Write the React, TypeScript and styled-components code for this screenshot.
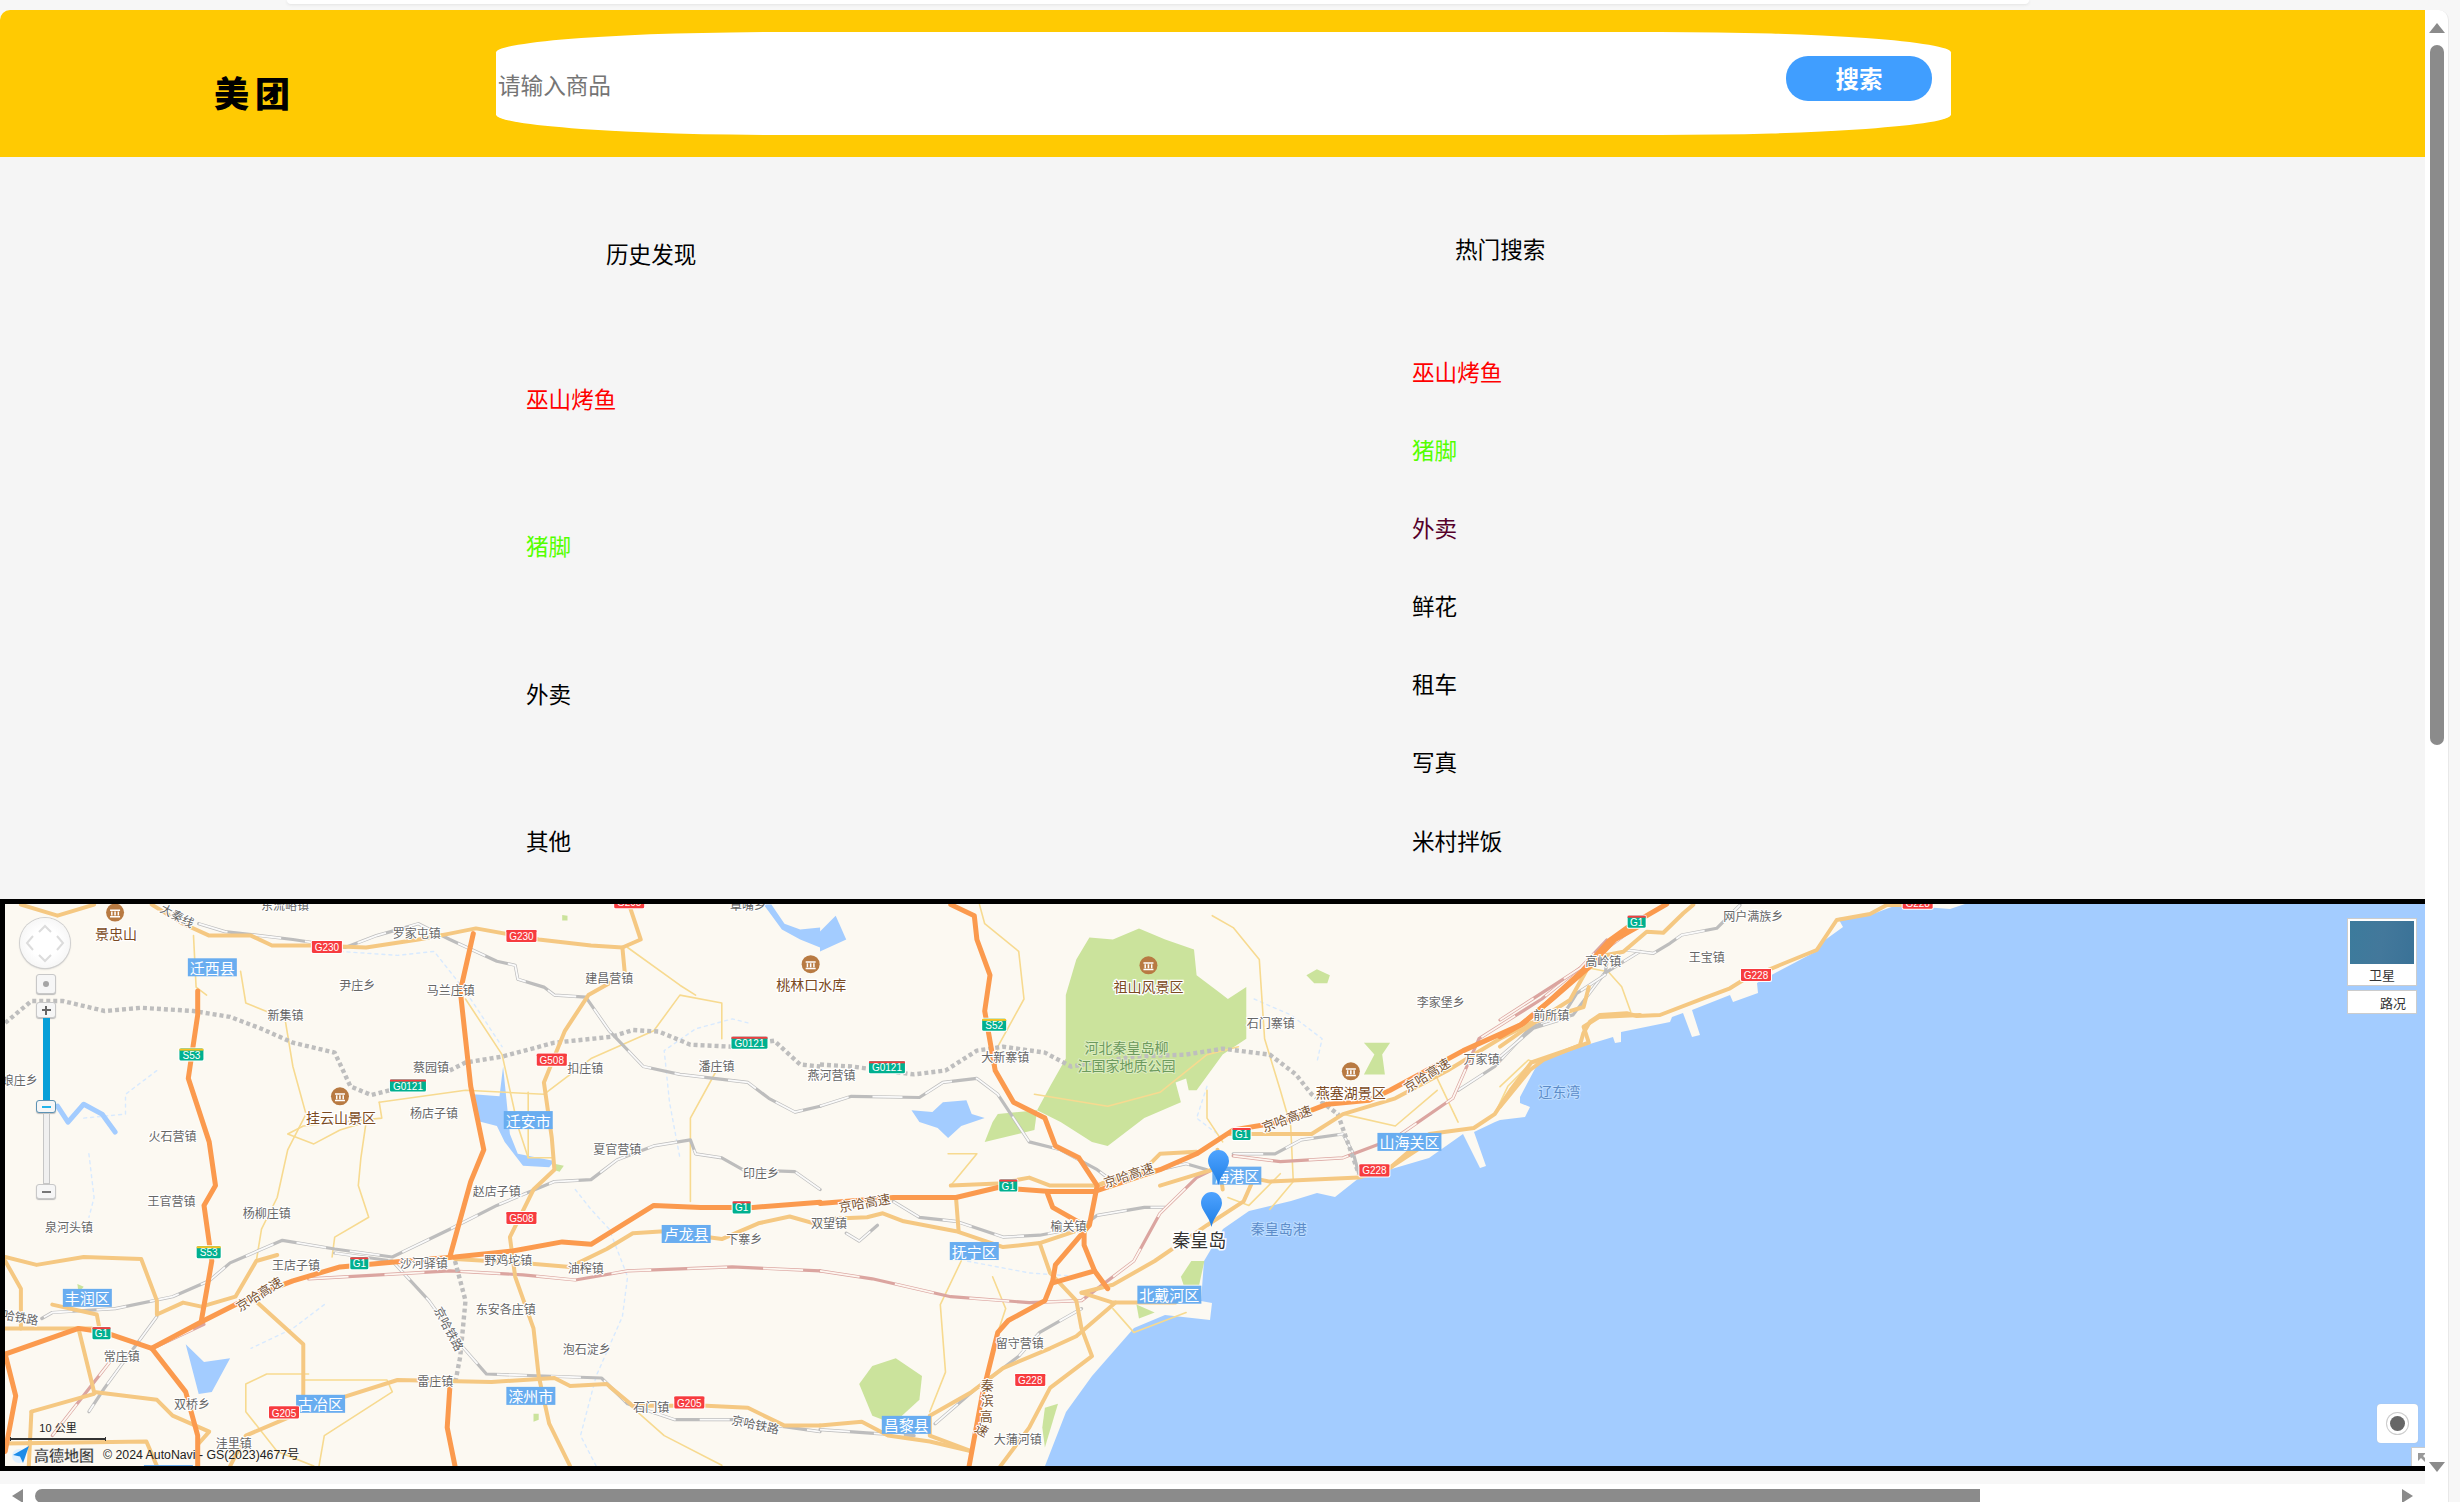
import React from 'react'
import styled, { createGlobalStyle } from 'styled-components'

const GlobalStyle = createGlobalStyle`
  html, body {
    margin: 0;
    width: 2460px;
    height: 1502px;
    overflow: hidden;
    background: #f7f7f7;
    font-family: "Liberation Sans", "Noto Sans CJK SC", sans-serif;
  }
`

const Page = styled.div`
  width: 2460px;
  height: 1502px;
  overflow: hidden;
`

const TopStrip = styled.div`
  height: 10px;
  padding: 0 431px 0 287px;
`

const TabEdge = styled.div`
  height: 4px;
  background: #fff;
  border-radius: 0 0 10px 10px;
  box-shadow: 0 1px 3px #e3e3e3;
`

const Frame = styled.div`
  display: flex;
  width: 2448px;
  height: 1492px;
  background: #fff;
  border-right: 1px solid #e8e8e8;
  border-radius: 10px 10px 0 0;
  overflow: hidden;
`

const Viewport = styled.div`
  width: 2425px;
  flex: none;
  overflow: hidden;
  background: #f7f7f7;
`

const Header = styled.header`
  display: flex;
  align-items: center;
  height: 147px;
  background: #ffca02;
`

const Logo = styled.div`
  flex: none;
  width: 496px;
  padding-left: 214px;
  box-sizing: border-box;
  margin-top: 15px;
  white-space: nowrap;
  font-family: "Noto Sans CJK SC", sans-serif;
  font-size: 35px;
  font-weight: 900;
  letter-spacing: 6px;
  color: #000;
`

const SearchBox = styled.div`
  display: flex;
  align-items: center;
  flex: none;
  width: 1455px;
  height: 103px;
  padding: 0 19px 0 2px;
  box-sizing: border-box;
  background: #fff;
  border-radius: 20%;
`

const SearchInput = styled.input`
  flex: 1;
  border: none;
  outline: none;
  padding: 0;
  margin-top: 1px;
  background: transparent;
  font-family: "Noto Sans CJK SC", sans-serif;
  font-size: 22.6px;
`

const SearchButton = styled.button`
  width: 146px;
  height: 45px;
  margin-bottom: 11px;
  border: none;
  border-radius: 22px;
  background: #409eff;
  color: #fff;
  font-family: "Noto Sans CJK SC", sans-serif;
  font-size: 23.5px;
  font-weight: 700;
`

const Lists = styled.section`
  display: grid;
  grid-template-columns: 886px 1fr;
  height: 742px;
  padding-left: 526px;
  background: #f5f5f5;
`

const Column = styled.div<{ $top: number }>`
  padding-top: ${p => p.$top}px;
`

const ColumnTitle = styled.h3<{ $indent: number; $after: number }>`
  margin: 0 0 ${p => p.$after}px ${p => p.$indent}px;
  font-family: "Noto Sans CJK SC", sans-serif;
  font-size: 22.6px;
  font-weight: 400;
  line-height: 34px;
  color: #000;
`

const ItemList = styled.ul<{ $gap: number }>`
  display: flex;
  flex-direction: column;
  gap: ${p => p.$gap}px;
  margin: 0;
  padding: 0;
  list-style: none;
`

const Item = styled.li<{ $color?: string }>`
  font-family: "Noto Sans CJK SC", sans-serif;
  font-size: 22.6px;
  line-height: 34px;
  color: ${p => p.$color || '#000'};
`

const MapBox = styled.div`
  width: 2440px;
  height: 562px;
  border: 5px solid #000;
`

const MapCanvas = styled.div`
  position: relative;
  width: 2440px;
  height: 562px;
  overflow: hidden;
  background: #fcf9f2;
`

const MapSvg = styled.svg`
  display: block;
`

const NavDisk = styled.div`
  position: absolute;
  left: 15px;
  top: 14px;
  width: 50px;
  height: 50px;
  border-radius: 50%;
  background: radial-gradient(circle, #fff 40%, #efefef);
  box-shadow: 0 0 0 1px #d0d0d0, 0 1px 2px #aaa;
  svg {
    display: block;
  }
`

const ZoomRail = styled.div`
  position: absolute;
  left: 31px;
  top: 70px;
  width: 20px;
  display: flex;
  flex-direction: column;
  align-items: center;
`

const ZoomKey = styled.div<{ $h: number; $after?: number; $active?: boolean }>`
  display: flex;
  align-items: center;
  justify-content: center;
  width: 20px;
  height: ${p => p.$h}px;
  margin-bottom: ${p => p.$after || 0}px;
  box-sizing: border-box;
  background: #f6f6f6;
  border: 1px solid ${p => (p.$active ? '#5c93b5' : '#c8c8c8')};
  border-radius: 3px;
  box-shadow: 0 1px 1px #bbb;
`

const Dot = styled.span`
  width: 6px;
  height: 6px;
  border-radius: 50%;
  background: #a5a5a5;
`

const Dash = styled.span<{ $color: string }>`
  position: relative;
  width: 9px;
  height: 2px;
  background: ${p => p.$color};
`

const PlusBar = styled.span`
  position: absolute;
  left: 3.5px;
  top: -3.5px;
  width: 2px;
  height: 9px;
  background: #666;
`

const ZoomTrack = styled.div<{ $h: number; $filled?: boolean }>`
  width: 7px;
  height: ${p => p.$h}px;
  box-sizing: border-box;
  background: ${p => (p.$filled ? '#079fd8' : '#f0f0f0')};
  border: ${p => (p.$filled ? 'none' : '1px solid #c6c6c6')};
`

const LayerCard = styled.div`
  position: absolute;
  left: 2342px;
  top: 14px;
  width: 70px;
  display: flex;
  flex-direction: column;
  gap: 4px;
  font-family: "Noto Sans CJK SC", sans-serif;
  font-size: 13px;
  color: #333;
`

const Satellite = styled.div`
  height: 68px;
  box-sizing: border-box;
  padding: 2px 2px 0;
  background: #fff;
  border: 1px solid #ccc;
  text-align: center;
  line-height: 21px;
`

const SatelliteThumb = styled.div`
  height: 43px;
  background: linear-gradient(100deg, #3c7b9c, #43789b 50%, #3a7297);
`

const Traffic = styled.div`
  height: 24px;
  box-sizing: border-box;
  padding-right: 10px;
  background: #fff;
  border: 1px solid #ccc;
  text-align: right;
  line-height: 24px;
`

const LocateButton = styled.div`
  position: absolute;
  left: 2372px;
  top: 500px;
  width: 41px;
  height: 39px;
  display: flex;
  align-items: center;
  justify-content: center;
  background: #fff;
  border-radius: 4px;
  box-shadow: 0 0 1px #bbb;
`

const LocateDot = styled.span`
  width: 15px;
  height: 15px;
  border-radius: 50%;
  background: #666;
  box-shadow: 0 0 0 3px #fff, 0 0 0 4px #ccc;
`

const ExpandTab = styled.div`
  position: absolute;
  left: 2406px;
  top: 543px;
  width: 30px;
  height: 20px;
  box-sizing: border-box;
  padding: 5px 0 0 6px;
  background: #fff;
  border: 1px solid #ccc;
  svg {
    display: block;
  }
`

const ScaleBar = styled.div`
  position: absolute;
  left: 5px;
  top: 517px;
  width: 96px;
  font-size: 11px;
  line-height: 14px;
  text-align: center;
  color: #222;
  font-family: "Liberation Sans", "Noto Sans CJK SC", sans-serif;
`

const ScaleLine = styled.div`
  height: 4px;
  margin-top: 2px;
  box-sizing: border-box;
  border: 1px solid #333;
  border-width: 0 1px;
  background: linear-gradient(#0000 1px, #333 1px, #333 3px, #0000 3px);
`

const Attribution = styled.div`
  position: absolute;
  left: 5px;
  top: 540px;
  display: flex;
  align-items: center;
  height: 20px;
  svg {
    display: block;
  }
`

const Brand = styled.span`
  margin-left: 4px;
  font-family: "Noto Sans CJK SC", sans-serif;
  font-size: 15px;
  font-weight: 700;
  color: #333;
  -webkit-text-stroke: 0.3px #fff;
`

const Copyright = styled.span`
  margin-left: 9px;
  font-size: 12.3px;
  color: #222;
`

const MapFoot = styled.div`
  height: 13px;
`

const HScroll = styled.div`
  display: flex;
  align-items: flex-start;
  height: 18px;
  padding: 5px 0 0 12px;
  box-sizing: border-box;
  background: #fff;
`

const HThumb = styled.div`
  flex: none;
  width: 1945px;
  height: 14px;
  margin: 0 422px 0 12px;
  background: #8b8b8b;
  border-radius: 7px 0 0 7px;
`

const ArrowLeft = styled.span`
  flex: none;
  border-style: solid;
  border-width: 7px 11px 7px 0;
  border-color: transparent #8b8b8b transparent transparent;
`

const ArrowRight = styled.span`
  flex: none;
  border-style: solid;
  border-width: 7px 0 7px 11px;
  border-color: transparent transparent transparent #8b8b8b;
`

const VScroll = styled.div`
  flex: 1;
  display: flex;
  flex-direction: column;
  align-items: center;
  padding: 13px 0 30px;
  box-sizing: border-box;
`

const ArrowUp = styled.span`
  flex: none;
  border-style: solid;
  border-width: 0 8px 10px;
  border-color: transparent transparent #8b8b8b;
`

const VThumb = styled.div`
  flex: none;
  width: 14px;
  height: 700px;
  margin: 12px 0 auto;
  background: #8b8b8b;
  border-radius: 7px;
`

const ArrowDown = styled.span`
  flex: none;
  border-style: solid;
  border-width: 10px 8px 0;
  border-color: #8b8b8b transparent transparent;
`

// map drawing parts
const WAY_STYLES: Record<string, string> = {
  minor: 'stroke:#f7da90;stroke-width:1.6;',
  gray: 'stroke:#bdbdbd;stroke-width:3.2;',
  grayTop: 'stroke:#fafafa;stroke-width:1.8;stroke-dasharray:30 24;stroke-linecap:butt;',
  dots: 'stroke:#bebebe;stroke-width:4.4;stroke-dasharray:4 3;stroke-linecap:butt;',
  pink: 'stroke:#dba5a0;stroke-width:3.2;',
  pinkTop: 'stroke:#fdf6f0;stroke-width:1.8;stroke-dasharray:40 36;stroke-linecap:butt;',
  nat: 'stroke:#f5c882;stroke-width:4;',
  high: 'stroke:#fb9a4e;stroke-width:5;',
  stream: 'stroke:#d8eaff;stroke-width:1.4;stroke-dasharray:3 4;',
  river: 'stroke:#a3ccff;stroke-width:5;',
}

const Way = styled.path<{ $kind: string }>`
  fill: none;
  stroke-linejoin: round;
  stroke-linecap: round;
  ${p => WAY_STYLES[p.$kind]}
`

const Area = styled.path<{ $fill: string }>`
  fill: ${p => p.$fill};
`

const LABEL_STYLES: Record<string, string> = {
  town: 'font-size:12px;fill:#666;stroke:#fff;stroke-width:2px;',
  scenic: 'font-size:14px;fill:#7b4a22;stroke:#fff;stroke-width:2.5px;',
  road: 'font-size:13px;fill:#7b5533;stroke:#fff;stroke-width:2px;',
  rail: 'font-size:12px;fill:#666;stroke:#fff;stroke-width:2px;',
  park: 'font-size:14px;fill:#6c9a5d;stroke:#dcecc0;stroke-width:2px;',
  sea: 'font-size:14px;fill:#5c8cc9;stroke:#bcdcff;stroke-width:2px;',
  city: 'font-size:18px;fill:#333;stroke:#fff;stroke-width:3px;',
  dist: 'font-size:15px;fill:#fff;stroke:none;',
}

const Label = styled.text<{ $kind: string }>`
  font-family: "Noto Sans CJK SC", sans-serif;
  text-anchor: middle;
  dominant-baseline: central;
  paint-order: stroke;
  ${p => LABEL_STYLES[p.$kind]}
`

const BadgeText = styled.text`
  font-family: "Liberation Sans", sans-serif;
  font-size: 10px;
  fill: #fff;
  text-anchor: middle;
  dominant-baseline: central;
`

// the zoomed crops were not scaled evenly, so points are kept as read and converted here
type Panel = 'L' | 'R' | 'Z'
const px = (a: Panel, x: number) => (a === 'L' ? x / 1.912 : a === 'R' ? 820 + x / 1.912 : 1500 + x / 3)
const py = (a: Panel, y: number) => (a === 'Z' ? 900 + y / 3 : 880 + y / 2.52)
const line = (a: Panel, d: number[], close = false) => {
  let out = ''
  for (let i = 0; i < d.length; i += 2) {
    out += `${i ? 'L' : 'M'}${px(a, d[i]).toFixed(1)} ${py(a, d[i + 1]).toFixed(1)}`
  }
  return out + (close ? 'Z' : '')
}

type W = [Panel, number[]]

const SEA =
  'M1045 1466L1066 1412L1092 1376L1134 1328L1165 1315L1210 1320L1212 1303L1201 1301L1204 1261L1223 1229L1249 1211L1291 1201L1317 1193L1335 1197L1359 1178L1395 1168L1429 1158L1463 1134L1480 1168L1486 1166L1474 1132L1495 1122L1500 1120L1525 1117L1530 1107L1520 1103L1520 1097L1538 1063L1580 1047L1613 1037L1615 1043L1621 1042L1621 1032L1670 1022L1672 1017L1683 1013L1692 1037L1700 1035L1692 1010L1730 995L1733 1002L1758 993L1757 983L1777 972L1815 952L1825 940L1843 927L1838 918L1870 915L1897 905L1950 909L1965 904L2445 904L2445 1466Z'

const GREENS: W[] = [
  ['R', [515, 145, 560, 150, 610, 122, 660, 150, 715, 175, 720, 240, 760, 280, 780, 300, 815, 270, 815, 400, 770, 440, 720, 530, 705, 530, 700, 500, 680, 510, 690, 560, 620, 600, 550, 670, 520, 660, 460, 610, 415, 580, 440, 520, 470, 450, 470, 290, 490, 200]],
  ['R', [340, 590, 415, 580, 410, 630, 315, 660, 330, 610]],
  ['R', [145, 1205, 195, 1250, 190, 1310, 140, 1370, 100, 1350, 75, 1270, 100, 1225]],
  ['R', [930, 240, 950, 225, 975, 240, 970, 260, 945, 260]],
  ['R', [1040, 410, 1090, 410, 1075, 440, 1080, 490, 1040, 490, 1060, 440]],
  ['R', [690, 1000, 710, 960, 735, 960, 725, 1020, 695, 1020]],
  ['R', [430, 1330, 455, 1320, 430, 1430, 425, 1380]],
  ['R', [605, 1070, 640, 1090, 610, 1105]],
  ['L', [1075, 88, 1085, 90, 1085, 102, 1075, 102]],
  ['L', [1020, 1345, 1030, 1345, 1030, 1360, 1020, 1365]],
  ['L', [1060, 715, 1078, 720, 1070, 735, 1058, 730]],
  ['L', [148, 1018, 160, 1025, 150, 1040]],
]

const LAKES: W[] = [
  ['L', [905, 540, 955, 545, 962, 470, 975, 640, 990, 690, 1060, 708, 1050, 724, 1000, 720, 965, 660, 950, 620, 915, 608, 905, 580]],
  ['L', [355, 1170, 390, 1215, 440, 1205, 405, 1290, 380, 1295, 365, 1220]],
  ['R', [175, 580, 215, 585, 235, 560, 280, 555, 290, 590, 315, 600, 270, 620, 245, 650, 225, 625, 190, 610]],
  ['R', [0, 130, 30, 90, 50, 150, 0, 180]],
  ['L', [1460, 62, 1475, 62, 1500, 110, 1530, 125, 1568, 120, 1568, 170, 1530, 150, 1495, 125]],
]

const WAYS: [string, Panel, number[]][] = [
  ['stream', 'L', [650, 180, 760, 190, 830, 180, 890, 280, 960, 420]],
  ['stream', 'L', [1430, 360, 1400, 350, 1330, 375, 1270, 430, 1280, 560, 1300, 700]],
  ['stream', 'L', [160, 600, 240, 590, 240, 540, 300, 480]],
  ['stream', 'L', [170, 690, 180, 800, 170, 850]],
  ['stream', 'L', [1100, 780, 1130, 830, 1165, 880, 1200, 1000, 1190, 1100, 1140, 1250, 1110, 1400, 1140, 1477]],
  ['stream', 'L', [620, 1070, 560, 1130, 480, 1180]],
  ['stream', 'R', [830, 300, 900, 340, 960, 400, 950, 460]],
  ['stream', 'R', [500, 1000, 400, 990, 280, 960]],
  ['stream', 'R', [740, 520, 720, 600, 760, 640]],
  ['river', 'L', [110, 570, 130, 610, 160, 565, 195, 590, 220, 635]],

  ['minor', 'L', [370, 140, 375, 270, 395, 290]],
  ['minor', 'L', [460, 230, 470, 310, 545, 350, 560, 470, 585, 590, 550, 680, 530, 800, 500, 880, 490, 960]],
  ['minor', 'L', [725, 560, 730, 600, 580, 620, 550, 640, 600, 665, 650, 630, 700, 610, 690, 700, 685, 770, 705, 850, 640, 900, 635, 950]],
  ['minor', 'L', [725, 560, 890, 530, 1040, 540]],
  ['minor', 'L', [890, 300, 960, 440, 990, 620, 1010, 700, 1055, 700]],
  ['minor', 'L', [1010, 535, 1010, 700]],
  ['minor', 'L', [1040, 540, 1130, 450, 1250, 380, 1300, 290, 1380, 310, 1380, 400]],
  ['minor', 'L', [1320, 810, 1320, 600, 1370, 480]],
  ['minor', 'L', [1200, 170, 1300, 265, 1330, 290]],
  ['minor', 'L', [590, 1245, 510, 1245, 470, 1270, 470, 1340, 530, 1440, 600, 1477]],
  ['minor', 'L', [580, 1260, 740, 1260, 750, 1290, 620, 1400, 610, 1477]],
  ['minor', 'L', [1165, 1280, 1210, 1330, 1270, 1400, 1380, 1475]],
  ['minor', 'R', [305, 62, 315, 110, 380, 180, 390, 300, 340, 420, 335, 480]],
  ['minor', 'R', [750, 90, 790, 120, 840, 200, 850, 400, 880, 530, 900, 620, 905, 760, 860, 830]],
  ['minor', 'R', [245, 690, 300, 690, 250, 770]],
  ['minor', 'R', [330, 1000, 355, 1080, 340, 1140]],
  ['minor', 'R', [270, 960, 230, 1070, 240, 1240, 210, 1340]],
  ['minor', 'R', [410, 540, 550, 570, 650, 535, 740, 440, 800, 420]],
  ['minor', 'R', [740, 530, 740, 600, 770, 660]],
  ['minor', 'R', [1180, 500, 1220, 610]],
  ['minor', 'R', [1360, 460, 1315, 520, 1290, 590]],
  ['minor', 'R', [1000, 590, 1100, 620, 1180, 530]],
  ['minor', 'R', [780, 800, 820, 820, 880, 740]],
  ['minor', 'R', [560, 1080, 600, 1140, 700, 1090]],
  ['minor', 'Z', [270, 205, 325, 215, 365, 260, 392, 335]],
  ['minor', 'Z', [0, 560, 85, 480, 110, 490]],

  ['gray', 'L', [380, 110, 430, 130, 560, 150, 660, 170, 720, 140, 800, 110, 860, 150, 950, 205, 985, 215, 990, 250, 1040, 270, 1060, 290, 1120, 295, 1165, 380, 1230, 470, 1300, 490, 1430, 510, 1470, 550, 1520, 585, 1568, 570]],
  ['gray', 'L', [1568, 780, 1520, 735, 1420, 730, 1380, 700, 1330, 690, 1320, 655, 1250, 670, 1180, 705, 1130, 755, 1060, 760, 950, 820, 860, 880, 750, 950, 640, 930, 540, 908, 440, 965, 400, 1010, 330, 1050, 220, 1080, 100, 1090, 80, 1105]],
  ['gray', 'L', [640, 940, 750, 960, 820, 1060, 880, 1170, 930, 1245, 1150, 1255, 1200, 1320, 1290, 1360, 1400, 1360, 1568, 1390]],
  ['gray', 'L', [300, 1100, 200, 1280, 170, 1340]],
  ['gray', 'R', [0, 570, 60, 545, 190, 548, 235, 510, 300, 500, 340, 540, 370, 600, 400, 660, 460, 680, 530, 730, 560, 760]],
  ['gray', 'R', [650, 730, 700, 715, 740, 730]],
  ['gray', 'R', [140, 810, 190, 850, 260, 860, 350, 900, 420, 895, 500, 875, 530, 845, 620, 825, 660, 825]],
  ['gray', 'R', [50, 890, 75, 910, 110, 870]],
  ['gray', 'R', [790, 690, 870, 690, 920, 655, 1000, 640, 1020, 690, 1030, 740]],
  ['gray', 'R', [1220, 530, 1290, 470, 1360, 370, 1440, 340, 1500, 235, 1568, 180]],
  ['gray', 'R', [220, 1370, 300, 1280, 380, 1200, 420, 1140, 500, 1080]],
  ['gray', 'R', [0, 1385, 110, 1395, 180, 1400]],
  ['gray', 'Z', [0, 470, 100, 385, 180, 360, 230, 280, 315, 225, 320, 190]],
  ['gray', 'Z', [380, 150, 460, 160, 510, 130, 545, 105, 650, 85, 720, 15]],

  ['pink', 'L', [590, 1005, 860, 985, 1000, 995, 1100, 1008, 1200, 985, 1400, 975, 1568, 985]],
  ['pink', 'L', [300, 1175, 390, 1120]],
  ['pink', 'L', [100, 1400, 210, 1215]],
  ['pink', 'R', [0, 985, 100, 1005, 250, 1050, 400, 1065, 500, 1060, 600, 960, 650, 840, 720, 750, 750, 730]],
  ['pink', 'R', [790, 695, 880, 710, 1000, 700, 1100, 650, 1210, 550, 1260, 400, 1380, 300, 1450, 225, 1568, 110]],
  ['pink', 'Z', [0, 360, 240, 205, 320, 120]],

  ['dots', 'L', [10, 360, 60, 305, 120, 305, 200, 330, 270, 322, 370, 330, 440, 345, 500, 375, 560, 410, 640, 435, 670, 520, 710, 542, 745, 530]],
  ['dots', 'L', [860, 480, 890, 460, 960, 445, 1060, 410, 1170, 395, 1210, 378, 1260, 382, 1320, 415, 1400, 420, 1480, 405, 1530, 465, 1568, 470]],
  ['dots', 'L', [870, 960, 890, 1060, 880, 1200, 870, 1270]],
  ['dots', 'R', [0, 465, 60, 470, 180, 490, 240, 480, 300, 430, 350, 420, 430, 435, 480, 470, 600, 445, 700, 440, 770, 425, 860, 440, 910, 490, 940, 540, 990, 590, 1030, 740]],

  ['nat', 'L', [40, 62, 110, 90, 180, 62]],
  ['nat', 'L', [290, 62, 350, 110, 400, 140, 480, 140, 520, 165, 600, 165, 700, 170, 800, 150, 860, 135, 910, 122, 1030, 150, 1130, 165, 1190, 170, 1225, 150, 1205, 70]],
  ['nat', 'L', [1190, 170, 1195, 240]],
  ['nat', 'L', [1165, 260, 1125, 290, 1080, 380, 1040, 510, 1055, 650, 1060, 730, 1020, 780, 975, 900, 985, 1000, 1020, 1130, 1030, 1250, 1050, 1370, 1090, 1477]],
  ['nat', 'L', [10, 950, 70, 970, 160, 950, 270, 955, 300, 1060, 300, 1095, 350, 1065, 385, 1075, 450, 1050, 490, 960, 530, 945]],
  ['nat', 'L', [480, 1050, 580, 1170, 580, 1320]],
  ['nat', 'L', [10, 1130, 190, 1130, 185, 1095, 100, 1070]],
  ['nat', 'L', [10, 960, 40, 1030, 40, 1130]],
  ['nat', 'L', [150, 1130, 180, 1290, 300, 1310, 330, 1350, 400, 1390, 380, 1420]],
  ['nat', 'L', [60, 1340, 180, 1295]],
  ['nat', 'L', [60, 1340, 55, 1477]],
  ['nat', 'L', [10, 1420, 280, 1415, 300, 1477]],
  ['nat', 'L', [640, 1310, 760, 1260, 940, 1265, 1060, 1255, 1090, 1275, 1160, 1270, 1210, 1325, 1350, 1325, 1430, 1330, 1500, 1375, 1568, 1375]],
  ['nat', 'L', [560, 1350, 470, 1400, 440, 1477]],
  ['nat', 'L', [870, 955, 1000, 965, 1090, 975, 1160, 930, 1210, 890, 1270, 885, 1380, 905, 1450, 865, 1510, 848, 1568, 870]],
  ['nat', 'R', [0, 855, 90, 850, 120, 840, 160, 860, 260, 885, 350, 925, 420, 915, 500, 880]],
  ['nat', 'R', [260, 800, 265, 885]],
  ['nat', 'R', [250, 770, 340, 765, 400, 750, 440, 770, 530, 770, 620, 730, 650, 690, 720, 685]],
  ['nat', 'R', [530, 770, 580, 740, 650, 730]],
  ['nat', 'R', [650, 770, 750, 730, 860, 760, 1030, 750, 1090, 725, 1165, 660]],
  ['nat', 'R', [420, 915, 440, 990, 490, 1060, 500, 1130, 520, 1200, 440, 1280, 400, 1380, 345, 1477]],
  ['nat', 'R', [825, 765, 810, 810, 740, 870, 640, 960, 560, 1020, 500, 1040]],
  ['nat', 'R', [760, 680, 770, 780]],
  ['nat', 'R', [780, 640, 940, 640, 1000, 590, 1100, 550, 1200, 480, 1300, 400, 1360, 360, 1460, 320, 1470, 270]],
  ['nat', 'R', [1090, 725, 1165, 640, 1250, 625, 1290, 590, 1320, 530, 1360, 460, 1470, 410, 1460, 370, 1490, 345, 1568, 340]],
  ['nat', 'R', [565, 1065, 490, 1150, 440, 1180, 350, 1230, 290, 1290, 210, 1350, 210, 1400, 290, 1440]],
  ['nat', 'R', [0, 1375, 80, 1365, 130, 1400, 210, 1415, 290, 1440]],
  ['nat', 'R', [500, 1040, 560, 1065, 680, 1065]],
  ['nat', 'Z', [0, 620, 90, 510, 130, 480, 240, 435, 250, 400, 270, 365, 300, 345, 380, 340, 410, 348, 480, 345, 610, 295, 690, 265, 730, 240, 840, 195, 950, 150, 1010, 60, 1110, 42, 1160, 15, 1205, 15]],
  ['nat', 'Z', [0, 440, 100, 370, 210, 300, 260, 210, 280, 195]],
  ['nat', 'Z', [320, 165, 370, 155, 440, 95, 490, 98, 550, 40, 580, 14]],

  ['high', 'L', [10, 1195, 150, 1130, 200, 1140, 290, 1180, 390, 1110, 480, 1050, 560, 1010, 650, 975, 760, 962, 870, 950, 980, 935, 1075, 912, 1130, 918, 1250, 820, 1340, 825, 1440, 825, 1568, 812]],
  ['high', 'L', [378, 280, 378, 340, 360, 500, 400, 660, 412, 770, 390, 820, 405, 960, 385, 1110]],
  ['high', 'L', [905, 135, 880, 280, 890, 400, 900, 520, 925, 680, 900, 760, 860, 950]],
  ['high', 'L', [290, 1180, 355, 1290, 378, 1400, 378, 1477]],
  ['high', 'L', [860, 1280, 855, 1380, 870, 1477]],
  ['high', 'L', [10, 1195, 30, 1300, 10, 1440]],
  ['high', 'R', [0, 815, 140, 800, 260, 800, 340, 775, 440, 785, 525, 785, 650, 730, 720, 690, 790, 630, 880, 610, 970, 565, 1050, 555, 1090, 530, 1230, 430, 1340, 365, 1400, 300, 1470, 220, 1520, 150, 1568, 115]],
  ['high', 'R', [250, 62, 295, 90, 300, 150, 325, 240, 315, 330, 335, 480, 370, 560, 430, 600, 450, 670, 495, 700, 530, 770, 515, 870, 450, 970, 445, 1010, 430, 1060, 360, 1110, 340, 1140, 310, 1300, 285, 1477]],
  ['high', 'R', [435, 790, 445, 825, 505, 870, 505, 920, 525, 985, 445, 1015]],
  ['high', 'R', [525, 985, 550, 1030]],
  ['high', 'Z', [0, 410, 70, 370, 140, 310, 250, 210, 330, 120, 400, 70, 500, 12]],
]

const LABELS: [string, Panel, number, number, string, number?][] = [
  ['town', 'L', 545, 62, '东流峪镇'],
  ['town', 'L', 1430, 62, '章嘴乡'],
  ['town', 'L', 797, 133, '罗家屯镇'],
  ['town', 'L', 683, 263, '尹庄乡'],
  ['town', 'L', 862, 277, '马兰庄镇'],
  ['town', 'L', 1165, 246, '建昌营镇'],
  ['town', 'L', 546, 340, '新集镇'],
  ['town', 'L', 824, 470, '蔡园镇'],
  ['town', 'L', 1119, 473, '扣庄镇'],
  ['town', 'L', 1370, 467, '潘庄镇'],
  ['town', 'L', 1590, 490, '燕河营镇'],
  ['town', 'L', 38, 502, '娘庄乡'],
  ['town', 'L', 830, 587, '杨店子镇'],
  ['town', 'L', 330, 645, '火石营镇'],
  ['town', 'L', 1180, 677, '夏官营镇'],
  ['town', 'L', 1455, 737, '印庄乡'],
  ['town', 'L', 328, 808, '王官营镇'],
  ['town', 'L', 510, 838, '杨柳庄镇'],
  ['town', 'L', 132, 873, '泉河头镇'],
  ['town', 'L', 950, 782, '赵店子镇'],
  ['town', 'L', 1423, 904, '下寨乡'],
  ['town', 'L', 1585, 862, '双望镇'],
  ['town', 'L', 566, 968, '王店子镇'],
  ['town', 'L', 810, 963, '沙河驿镇'],
  ['town', 'L', 972, 957, '野鸡坨镇'],
  ['town', 'L', 1120, 977, '油榨镇'],
  ['town', 'L', 967, 1079, '东安各庄镇'],
  ['town', 'L', 1122, 1181, '泡石淀乡'],
  ['town', 'L', 233, 1198, '常庄镇'],
  ['town', 'L', 832, 1262, '雷庄镇'],
  ['town', 'L', 367, 1320, '双桥乡'],
  ['town', 'L', 1245, 1328, '石门镇'],
  ['town', 'L', 447, 1418, '洼里镇'],
  ['town', 'R', 354, 445, '大新寨镇'],
  ['town', 'R', 862, 360, '石门寨镇'],
  ['town', 'R', 1187, 305, '李家堡乡'],
  ['town', 'R', 1398, 338, '前所镇'],
  ['town', 'R', 1265, 450, '万家镇'],
  ['town', 'R', 475, 870, '榆关镇'],
  ['town', 'R', 382, 1165, '留守营镇'],
  ['town', 'R', 378, 1408, '大蒲河镇'],
  ['town', 'Z', 310, 182, '高岭镇'],
  ['town', 'Z', 760, 45, '网户满族乡'],
  ['town', 'Z', 620, 170, '王宝镇'],
  ['rail', 'L', 340, 88, '大秦线', 28],
  ['rail', 'L', 860, 1130, '京哈铁路', 62],
  ['rail', 'L', 1445, 1370, '京哈铁路', 12],
  ['rail', 'L', 40, 1100, '哈铁路', 10],
  ['road', 'L', 495, 1042, '京哈高速', -32],
  ['road', 'R', 85, 812, '京哈高速', -10],
  ['road', 'R', 590, 742, '京哈高速', -18],
  ['road', 'R', 892, 600, '京哈高速', -20],
  ['road', 'R', 1160, 490, '京哈高速', -32],
  ['road', 'R', 320, 1272, '秦'],
  ['road', 'R', 320, 1310, '滨'],
  ['road', 'R', 318, 1350, '高'],
  ['road', 'R', 310, 1385, '速', 30],
  ['scenic', 'L', 222, 133, '景忠山'],
  ['scenic', 'L', 652, 597, '挂云山景区'],
  ['scenic', 'L', 1551, 263, '桃林口水库'],
  ['scenic', 'R', 628, 268, '祖山风景区'],
  ['scenic', 'R', 1015, 535, '燕塞湖景区'],
  ['park', 'R', 586, 422, '河北秦皇岛柳'],
  ['park', 'R', 586, 467, '江国家地质公园'],
  ['sea', 'R', 877, 878, '秦皇岛港'],
  ['sea', 'Z', 178, 573, '辽东湾'],
  ['city', 'R', 725, 905, '秦皇岛'],
]

const DISTRICTS: [Panel, number, number, string][] = [
  ['L', 406, 220, '迁西县'],
  ['L', 1010, 605, '迁安市'],
  ['L', 167, 1053, '丰润区'],
  ['L', 1312, 892, '卢龙县'],
  ['L', 613, 1320, '古冶区'],
  ['L', 1015, 1300, '滦州市'],
  ['L', 322, 1497, '开平区'],
  ['R', 797, 745, '海港区'],
  ['R', 1127, 660, '山海关区'],
  ['R', 295, 935, '抚宁区'],
  ['R', 668, 1045, '北戴河区'],
  ['R', 165, 1373, '昌黎县'],
]

// red national roads, green expressways, teal provincial ones with a yellow cap
const BADGES: [Panel, number, number, string, string, string][] = [
  ['L', 625, 169, 'G230', '#f73c3f', '#f73c3f'],
  ['L', 997, 141, 'G230', '#f73c3f', '#f73c3f'],
  ['L', 1203, 56, 'G205', '#f73c3f', '#f73c3f'],
  ['L', 366, 440, 'S53', '#00b08f', '#f8c322'],
  ['L', 399, 938, 'S53', '#00b08f', '#f8c322'],
  ['L', 780, 518, 'G0121', '#00b08f', '#f73c3f'],
  ['L', 1433, 410, 'G0121', '#00b08f', '#f73c3f'],
  ['L', 1055, 453, 'G508', '#f73c3f', '#f73c3f'],
  ['L', 997, 852, 'G508', '#f73c3f', '#f73c3f'],
  ['L', 687, 966, 'G1', '#00b08f', '#f73c3f'],
  ['L', 194, 1142, 'G1', '#00b08f', '#f73c3f'],
  ['L', 1418, 825, 'G1', '#00b08f', '#f73c3f'],
  ['L', 543, 1342, 'G205', '#f73c3f', '#f73c3f'],
  ['L', 1318, 1317, 'G205', '#f73c3f', '#f73c3f'],
  ['R', 333, 365, 'S52', '#00b08f', '#f8c322'],
  ['R', 128, 472, 'G0121', '#00b08f', '#f73c3f'],
  ['R', 806, 640, 'G1', '#00b08f', '#f73c3f'],
  ['R', 360, 770, 'G1', '#00b08f', '#f73c3f'],
  ['R', 1060, 732, 'G228', '#f73c3f', '#f73c3f'],
  ['R', 402, 1260, 'G228', '#f73c3f', '#f73c3f'],
  ['Z', 410, 65, 'G1', '#00b08f', '#f73c3f'],
  ['Z', 768, 225, 'G228', '#f73c3f', '#f73c3f'],
  ['Z', 1253, 8, 'G228', '#f73c3f', '#f73c3f'],
]

const SIGHTS: [Panel, number, number][] = [
  ['L', 220, 82],
  ['L', 650, 545],
  ['L', 1550, 212],
  ['R', 628, 215],
  ['R', 1015, 482],
]

const Sight = ({ x, y }: { x: number; y: number }) => (
  <g>
    <circle cx={x} cy={y} r={9} fill="#b87a42" />
    <path d={`M${x - 5} ${y - 3}h10v1.5h-10zM${x - 4} ${y - 1}h1.5v4h-1.5zM${x - 0.8} ${y - 1}h1.6v4h-1.6zM${x + 2.5} ${y - 1}h1.5v4h-1.5zM${x - 5} ${y + 3.5}h10v1.5h-10z`} fill="#fff" />
  </g>
)

const Badge = ({ x, y, text, bg, cap }: { x: number; y: number; text: string; bg: string; cap: string }) => {
  const w = text.length * 6 + 6
  return (
    <g>
      <rect x={x - w / 2 - 1} y={y - 7} width={w + 2} height={14} rx={2} fill="#fff" />
      <rect x={x - w / 2} y={y - 6} width={w} height={12} rx={1.5} fill={bg} />
      <rect x={x - w / 2} y={y - 6} width={w} height={2} fill={cap} />
      <BadgeText x={x} y={y + 0.5}>{text}</BadgeText>
    </g>
  )
}

const District = ({ x, y, text }: { x: number; y: number; text: string }) => {
  const w = text.length * 15 + 4
  return (
    <g>
      <rect x={x - w / 2} y={y - 9} width={w} height={18} fill="#69adf0" />
      <Label $kind="dist" x={x} y={y}>{text}</Label>
    </g>
  )
}

const Pin = ({ cx, top }: { cx: number; top: number }) => (
  <path
    d={`M${cx - 10.5} ${top + 11}a10.5 11 0 0 1 21 0c0 7 -8 13 -10.5 24c-2.5 -11 -10.5 -17 -10.5 -24z`}
    fill="url(#pinFill)"
  />
)

const MapDrawing = () => (
  <MapSvg width={2440} height={562} viewBox="5 904 2440 562">
    <defs>
      <linearGradient id="pinFill" x1="0" y1="0" x2="0" y2="1">
        <stop offset="0" stopColor="#4fa3ff" />
        <stop offset="1" stopColor="#1f7fe6" />
      </linearGradient>
    </defs>
    <Area $fill="#a3ccff" d={SEA} />
    {GREENS.map(([a, d], i) => (
      <Area key={i} $fill="#cbe39c" d={line(a, d, true)} />
    ))}
    {LAKES.map(([a, d], i) => (
      <Area key={i} $fill="#a3ccff" d={line(a, d, true)} />
    ))}
    {WAYS.map(([kind, a, d], i) => (
      <React.Fragment key={i}>
        <Way $kind={kind} d={line(a, d)} />
        {kind === 'gray' && <Way $kind="grayTop" d={line(a, d)} />}
        {kind === 'pink' && <Way $kind="pinkTop" d={line(a, d)} />}
      </React.Fragment>
    ))}
    {SIGHTS.map(([a, x, y], i) => (
      <Sight key={i} x={px(a, x)} y={py(a, y)} />
    ))}
    {LABELS.map(([kind, a, x, y, text, rot], i) => (
      <Label
        key={i}
        $kind={kind}
        x={px(a, x)}
        y={py(a, y)}
        transform={rot ? `rotate(${rot} ${px(a, x)} ${py(a, y)})` : undefined}
      >
        {text}
      </Label>
    ))}
    {DISTRICTS.map(([a, x, y, text], i) => (
      <District key={i} x={px(a, x)} y={py(a, y)} text={text} />
    ))}
    {BADGES.map(([a, x, y, text, bg, cap], i) => (
      <Badge key={i} x={px(a, x)} y={py(a, y)} text={text} bg={bg} cap={cap} />
    ))}
    <Pin cx={1218.5} top={1150} />
    <Pin cx={1211.5} top={1192} />
  </MapSvg>
)

const historyItems = [
  { name: '巫山烤鱼', color: '#ff0000' },
  { name: '猪脚', color: '#55ff00' },
  { name: '外卖' },
  { name: '其他' },
]

const hotItems = [
  { name: '巫山烤鱼', color: '#ff0000' },
  { name: '猪脚', color: '#55ff00' },
  { name: '外卖', color: '#55002a' },
  { name: '鲜花' },
  { name: '租车' },
  { name: '写真' },
  { name: '米村拌饭' },
]

export default function App() {
  return (
    <Page>
      <GlobalStyle />
      <TopStrip>
        <TabEdge />
      </TopStrip>
      <Frame>
        <Viewport>
          <Header>
            <Logo>美团</Logo>
            <SearchBox>
              <SearchInput placeholder="请输入商品" />
              <SearchButton>搜索</SearchButton>
            </SearchBox>
          </Header>
          <Lists>
            <Column $top={80}>
              <ColumnTitle $indent={80} $after={111}>历史发现</ColumnTitle>
              <ItemList $gap={113.3}>
                {historyItems.map(item => (
                  <Item key={item.name} $color={item.color}>{item.name}</Item>
                ))}
              </ItemList>
            </Column>
            <Column $top={75}>
              <ColumnTitle $indent={43} $after={89}>热门搜索</ColumnTitle>
              <ItemList $gap={44.1}>
                {hotItems.map(item => (
                  <Item key={item.name} $color={item.color}>{item.name}</Item>
                ))}
              </ItemList>
            </Column>
          </Lists>
          <MapBox>
            <MapCanvas>
              <MapDrawing />
              <NavDisk>
                <svg width="50" height="50" viewBox="0 0 50 50" fill="none" stroke="#dcdcdc" strokeWidth="2">
                  <path d="M19 14l6-6 6 6M19 37l6 6 6-6M13 18l-6 7 6 7M37 18l6 7-6 7" />
                </svg>
              </NavDisk>
              <ZoomRail>
                <ZoomKey $h={20} $after={8}><Dot /></ZoomKey>
                <ZoomKey $h={16}><Dash $color="#666"><PlusBar /></Dash></ZoomKey>
                <ZoomTrack $h={82} $filled />
                <ZoomKey $h={13} $active><Dash $color="#22b3ea" /></ZoomKey>
                <ZoomTrack $h={71} />
                <ZoomKey $h={15}><Dash $color="#777" /></ZoomKey>
              </ZoomRail>
              <LayerCard>
                <Satellite>
                  <SatelliteThumb />
                  卫星
                </Satellite>
                <Traffic>路况</Traffic>
              </LayerCard>
              <LocateButton><LocateDot /></LocateButton>
              <ExpandTab>
                <svg width="10" height="10" viewBox="0 0 10 10" fill="#999">
                  <path d="M0 0h8L5 3l5 5-2 2-5-5-3 3z" />
                </svg>
              </ExpandTab>
              <ScaleBar>
                10 公里
                <ScaleLine />
              </ScaleBar>
              <Attribution>
                <svg width="20" height="20" viewBox="0 0 20 20">
                  <circle cx="9" cy="12" r="7" fill="#dff0ff" />
                  <path d="M19 2L3 11l7 1.5L13 19z" fill="#1c8be8" />
                </svg>
                <Brand>高德地图</Brand>
                <Copyright>© 2024 AutoNavi - GS(2023)4677号</Copyright>
              </Attribution>
            </MapCanvas>
          </MapBox>
          <MapFoot />
          <HScroll>
            <ArrowLeft />
            <HThumb />
            <ArrowRight />
          </HScroll>
        </Viewport>
        <VScroll>
          <ArrowUp />
          <VThumb />
          <ArrowDown />
        </VScroll>
      </Frame>
    </Page>
  )
}
